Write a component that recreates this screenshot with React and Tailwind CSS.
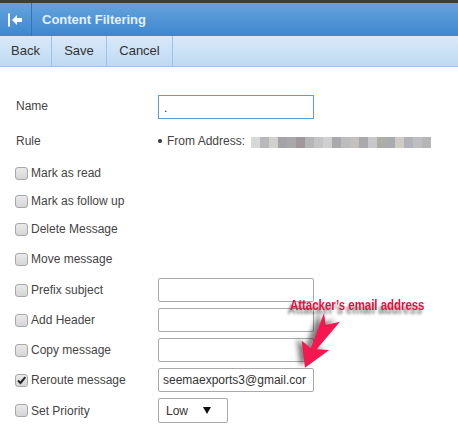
const blurCols = ['#d8d8d8','#b9b9bb','#d2d0cd','#a4a4a8','#a9a7aa','#9f9799','#b5b5b7','#c4c4c6','#cfcfd0','#a8a8ad','#bcbcbe','#c4c0be','#a9a9ae','#c8c8ca','#aeaca6','#a9abb0','#cfccc8','#b2b3b8','#bebfc2','#b6b6b6']

function Check({ checked }){
  return (
    <span className="w-[13px] h-[13px] rounded-[3px] border border-[#a8a8a8] bg-gradient-to-b from-[#eaeaea] to-[#d6d6d6] flex items-center justify-center shrink-0">
      {checked && (
        <svg width="11" height="11" viewBox="0 0 11 11">
          <path d="M2 5.5 L4.5 8 L9.3 2.2" fill="none" stroke="#222" strokeWidth="2" />
        </svg>
      )}
    </span>
  )
}

function Row({ label, h, checked, children }){
  return (
    <div className={`flex items-center ${h}`}>
      <div className="w-[158px] flex items-center gap-[3px] pl-[15px] shrink-0">
        <Check checked={checked} />
        <span>{label}</span>
      </div>
      {children}
    </div>
  )
}

function Box({ value }){
  return (
    <div className="w-[156px] h-[24px] border border-[#a9a9a9] rounded-[2px] bg-white pl-[4px] leading-[22px] text-[#333] overflow-hidden whitespace-nowrap">{value}</div>
  )
}

export default function App(){
  return (
    <div className="relative w-[458px] h-[441px] bg-white text-[12px] text-[#444] overflow-hidden font-['Liberation_Sans',Arial,sans-serif]">
      <div className="h-[3px] bg-[#3c3c3c]"></div>

      <div className="h-[33px] flex items-center bg-gradient-to-b from-[#65a3dd] to-[#3d87cf]">
        <div className="w-[32px] h-full border-r border-[#2f75b8] flex items-center justify-center">
          <svg width="16" height="14" viewBox="0 0 16 14">
            <rect x="0" y="0.5" width="2" height="13" fill="#fff" />
            <path d="M4 7 L9 2 V5 H14 V9 H9 V12 Z" fill="#fff" />
          </svg>
        </div>
        <div className="pl-[10px] text-[13px] font-bold text-[#e3f0fb]">Content Filtering</div>
      </div>

      <div className="h-[31px] flex bg-gradient-to-b from-[#d9e9f8] to-[#bedaf3] border-b border-[#9cc4e8] text-[13px] text-[#333]">
        <div className="w-[52px] flex items-center justify-center border-r border-[#9cc4e8]">Back</div>
        <div className="w-[55px] flex items-center justify-center border-r border-[#9cc4e8]">Save</div>
        <div className="w-[66px] flex items-center justify-center border-r border-[#9cc4e8]">Cancel</div>
      </div>

      <div className="flex flex-col pt-[28px]">
        <div className="flex items-center h-[24px]">
          <div className="w-[158px] pl-[16px] pb-[2px] shrink-0">Name</div>
          <div className="w-[156px] h-[24px] border border-[#5b9dd9] bg-white pl-[5px] leading-[24px] text-[#333]">.</div>
        </div>

        <div className="flex items-center h-[28px] mt-[8px]">
          <div className="w-[158px] pl-[16px] shrink-0">Rule</div>
          <div className="flex items-center">
            <span className="w-[4px] h-[4px] rounded-full bg-[#333] mr-[5px]"></span>
            <span className="mr-[6px]">From Address:</span>
            <div className="flex h-[11px] mt-[3px]">
              {blurCols.map((c, i) => <span key={i} className="w-[9px] h-full" style={{ background: c }}></span>)}
            </div>
          </div>
        </div>

        <Row label="Mark as read" h="h-[28px] mt-[4px]" />
        <Row label="Mark as follow up" h="h-[28px]" />
        <Row label="Delete Message" h="h-[28px]" />
        <Row label="Move message" h="h-[30px] mt-[1px]" />
        <Row label="Prefix subject" h="h-[24px] mt-[4px]"><Box /></Row>
        <Row label="Add Header" h="h-[24px] mt-[6px]"><Box /></Row>
        <Row label="Copy message" h="h-[24px] mt-[6px]"><Box /></Row>
        <Row label="Reroute message" h="h-[24px] mt-[6px]" checked><Box value="seemaexports3@gmail.cor" /></Row>
        <Row label="Set Priority" h="h-[25px] mt-[6px]">
          <div className="w-[70px] h-[25px] border border-[#a9a9a9] rounded-[2px] bg-white flex items-center justify-between pl-[7px] pr-[16px] text-[#333]">
            <span>Low</span>
            <span className="w-0 h-0 border-l-[4px] border-r-[4px] border-t-[7px] border-l-transparent border-r-transparent border-t-[#111]"></span>
          </div>
        </Row>
      </div>

      {/* annotation drawn over the form */}
      <div className="absolute left-[290px] top-[295px] text-[14px] font-bold text-[#e8123f] whitespace-nowrap origin-left scale-x-[0.815] [text-shadow:-3px_4px_3px_rgba(0,0,0,0.5)]">Attacker’s email address</div>
      <svg className="absolute left-[290px] top-[305px]" width="60" height="70" viewBox="290 305 60 70">
        <defs>
          <filter id="sh" x="-50%" y="-50%" width="200%" height="200%">
            <feGaussianBlur stdDeviation="2.5" />
          </filter>
        </defs>
        <path d="M324 313 L325.7 325 L340 321.7 L316.7 349.3 L329.3 350 L305 367.7 L301.7 340.7 L310.7 348.3 Z" fill="#000" opacity="0.5" filter="url(#sh)" transform="translate(-5 -2)" />
        <path d="M324 313 L325.7 325 L340 321.7 L316.7 349.3 L329.3 350 L305 367.7 L301.7 340.7 L310.7 348.3 Z" fill="#f5174f" />
      </svg>
    </div>
  )
}
